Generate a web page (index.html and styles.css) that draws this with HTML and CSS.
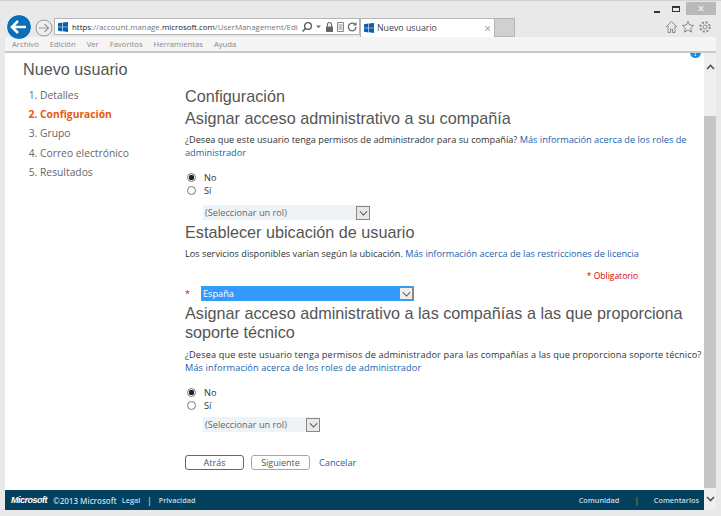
FILE: index.html
```html
<!DOCTYPE html>
<html lang="es">
  <head>
    <meta charset="UTF-8" />
    <title>Nuevo usuario</title>
    <link rel="stylesheet" href="styles.css">
  </head>
  <body>
    <div class="window">
      <div class="toolbar">
        <div class="back">
          <svg width="26" height="26" viewBox="0 0 26 26"><circle cx="13" cy="13" r="12.500" fill="#0a6fb7" stroke="#fff"/><path d="M6 13h14M12 7l-6 6 6 6" fill="none" stroke="#fff" stroke-width="2.600"/></svg>
        </div>
        <div class="forward">
          <svg width="18" height="18" viewBox="0 0 18 18"><circle cx="9" cy="9" r="8" fill="#eee" stroke="#999"/><path d="M4 9h9M9.500 5l4 4-4 4" fill="none" stroke="#999" stroke-width="1.200"/></svg>
        </div>
        <div class="address">
          <svg class="winlogo" width="10" height="10" viewBox="0 0 10 10"><path d="M0 1.200l4.400-.7v4.200H0zM5 .4L10 0v4.700H5zM0 5.300h4.400v4.200L0 8.800zM5 5.300h5V10l-5-.7z" fill="#0a5fb0"/></svg>
          <span class="url"><b>https</b>://account.manage.<b>microsoft.com</b>/UserManagement/Edit</span>
          <svg class="addr-icons" width="58" height="12" viewBox="0 0 58 12">
            <circle cx="7" cy="5" r="3.400" fill="none" stroke="#555" stroke-width="1.300"/><path d="M4.500 7.500L1.500 10.500" stroke="#555" stroke-width="1.500"/>
            <path d="M15 4.500h5l-2.500 2.700z" fill="#777"/>
            <path d="M25 5.500h7v5.500h-7z" fill="#666"/><path d="M26.500 5.500V3.500a2 2 0 0 1 4 0v2" fill="none" stroke="#666" stroke-width="1.200"/>
            <path d="M36.500 1.500h6v9h-6zM37.500 4h4M37.500 6h4M37.500 8h4" fill="none" stroke="#888"/>
            <path d="M55 6a3.800 3.800 0 1 1-1.200-2.800" fill="none" stroke="#666" stroke-width="1.300"/><path d="M55.500 1v3.500H52z" fill="#666"/>
          </svg>
        </div>
        <div class="tab">
          <svg width="10" height="10" viewBox="0 0 10 10"><path d="M0 1.200l4.400-.7v4.200H0zM5 .4L10 0v4.700H5zM0 5.300h4.400v4.200L0 8.800zM5 5.300h5V10l-5-.7z" fill="#0a5fb0"/></svg>
          <span class="tab-title">Nuevo usuario</span>
          <span class="tab-close">×</span>
        </div>
        <div class="newtab"></div>
        <div class="tools">
          <svg width="46" height="14" viewBox="0 0 46 14" fill="none" stroke="#8a8a8a">
            <path d="M1 7l5.500-5.500L12 7M3 6v6.500h2.500V9h2v3.500H10V6"/>
            <path d="M23 1.200l1.700 3.800 4 .4-3 2.700.9 4-3.600-2.100-3.600 2.100.9-4-3-2.700 4-.4z"/>
            <circle cx="40" cy="7" r="2"/><circle cx="40" cy="7" r="4.700" stroke-width="2" stroke-dasharray="2 1.700"/>
          </svg>
        </div>
        <div class="winbtns">
          <span class="minbtn"></span>
          <span class="maxbtn"></span>
          <span class="closebtn">×</span>
        </div>
      </div>
      <div class="menubar">
        <span>Archivo</span><span>Edición</span><span>Ver</span><span>Favoritos</span><span>Herramientas</span><span>Ayuda</span>
      </div>

      <div class="viewport">
        <div class="page">
          <div class="columns">
            <aside class="sidebar">
              <h1>Nuevo usuario</h1>
              <ol class="steps">
                <li>Detalles</li>
                <li class="active">Configuración</li>
                <li>Grupo</li>
                <li>Correo electrónico</li>
                <li>Resultados</li>
              </ol>
            </aside>
            <main class="content">
              <span class="help">?</span>
              <h2>Configuración</h2>
              <h2>Asignar acceso administrativo a su compañía</h2>
              <p>¿Desea que este usuario tenga permisos de administrador para su compañía? <a href="#">Más información acerca de los roles de administrador</a></p>
              <div class="radios">
                <label><span class="radio on"></span>No</label>
                <label><span class="radio"></span>Sí</label>
              </div>
              <div class="select role"><span>(Seleccionar un rol)</span><i class="arrow"></i></div>

              <h2 class="location">Establecer ubicación de usuario</h2>
              <p>Los servicios disponibles varían según la ubicación. <a href="#">Más información acerca de las restricciones de licencia</a></p>
              <div class="required">* Obligatorio</div>
              <div class="country-row">
                <span class="star">*</span>
                <div class="select country"><span>España</span><i class="arrow"></i></div>
              </div>

              <h2 class="long">Asignar acceso administrativo a las compañías a las que proporciona soporte técnico</h2>
              <p class="wide">¿Desea que este usuario tenga permisos de administrador para las compañías a las que proporciona soporte técnico?<br><a href="#">Más información acerca de los roles de administrador</a></p>
              <div class="radios">
                <label><span class="radio on"></span>No</label>
                <label><span class="radio"></span>Sí</label>
              </div>
              <div class="select role short"><span>(Seleccionar un rol)</span><i class="arrow"></i></div>

              <div class="buttons">
                <button>Atrás</button>
                <button class="primary">Siguiente</button>
                <a href="#">Cancelar</a>
              </div>
            </main>
          </div>
          <footer class="footer">
            <span class="mslogo">Microsoft</span>
            <span>©2013 Microsoft</span>
            <span class="small">Legal</span>
            <span class="bar">|</span>
            <span class="small">Privacidad</span>
            <span class="spacer"></span>
            <span class="small">Comunidad</span>
            <span class="sep">|</span>
            <span class="small">Comentarios</span>
          </footer>
        </div>
        <div class="scrollbar">
          <div class="sb-arrow up"><svg width="9" height="6" viewBox="0 0 9 6"><path d="M1 5l3.500-3.500L8 5" fill="none" stroke="#555" stroke-width="1.600"/></svg></div>
          <div class="sb-thumb"></div>
          <div class="sb-arrow"><svg width="9" height="6" viewBox="0 0 9 6"><path d="M1 1l3.500 3.500L8 1" fill="none" stroke="#555" stroke-width="1.600"/></svg></div>
        </div>
      </div>
    </div>
  </body>
</html>
```

FILE: styles.css
```css
* {
  box-sizing: border-box;
}

body {
  margin: 0;
  font-family: "Open Sans", sans-serif;
  font-size: 9.200px;
  color: #333;
  background: #e9e9e9;
}

.window {
  width: 721px;
  height: 516px;
  display: flex;
  flex-direction: column;
  border-top: 1px solid #d0d0d0;
  overflow: hidden;
}

.toolbar {
  height: 36px;
  flex-shrink: 0;
  display: flex;
  align-items: flex-end;
  padding-left: 6px;
  position: relative;
}

.back {
  height: 26px;
  margin-bottom: -3px;
  position: relative;
  z-index: 1;
}

.forward {
  height: 18px;
  margin: 0 1px 0 3px;
}

.address {
  width: 306px;
  height: 17px;
  margin-bottom: 2px;
  border: 1px solid #b5b5b5;
  background: #fff;
  display: flex;
  align-items: center;
  padding-left: 2px;
}

.winlogo {
  margin: 0 4px 0 1px;
  flex-shrink: 0;
}

.url {
  width: 226px;
  overflow: hidden;
  white-space: nowrap;
  color: #777;
  font-size: 7.900px;
}

.url b {
  color: #222;
  font-weight: 400;
}

.addr-icons {
  flex-shrink: 0;
  margin-left: 3px;
}

.tab {
  width: 135px;
  height: 19px;
  background: #fff;
  border: 1px solid #b5b5b5;
  border-bottom: none;
  display: flex;
  align-items: center;
  padding-left: 3px;
  gap: 3px;
}

.tab-title {
  flex: 1;
  color: #444;
  font-size: 8.800px;
}

.tab-close {
  color: #999;
  font-size: 12px;
  margin-right: 3px;
}

.newtab {
  width: 20px;
  height: 19px;
  background: #d0d0d0;
  border: 1px solid #b5b5b5;
  border-left: none;
}

.tools {
  position: absolute;
  right: 10px;
  top: 19px;
}

.winbtns {
  position: absolute;
  top: 1px;
  right: 5px;
  display: flex;
  height: 13px;
  align-items: center;
}

.minbtn {
  width: 6px;
  height: 2px;
  background: #333;
  margin: 7px 12px 0 0;
}

.maxbtn {
  width: 8px;
  height: 6px;
  border: 1px solid #333;
  border-top-width: 2px;
  margin-right: 6px;
}

.closebtn {
  width: 30px;
  height: 13px;
  background: #b9b9b9;
  color: #fff;
  font-size: 12px;
  line-height: 13px;
  text-align: center;
}

.menubar {
  margin: 0 5px;
  height: 16px;
  flex-shrink: 0;
  background: #f5f5f5;
  border-bottom: 2px solid #c8c8c8;
  display: flex;
  gap: 11px;
  align-items: center;
  padding-left: 7px;
  font-size: 7.700px;
  color: #888;
}

.viewport {
  flex: 1;
  display: flex;
  margin: 0 5px 6px 5px;
  min-height: 0;
}

.page {
  flex: 1;
  background: #fff;
  display: flex;
  flex-direction: column;
  min-width: 0;
}

.columns {
  flex: 1;
  display: flex;
  min-height: 0;
  overflow: hidden;
}

.sidebar {
  width: 180px;
  padding-left: 18px;
}

.sidebar h1 {
  margin: 6px 0 7px;
  font-family: "Liberation Sans", sans-serif;
  font-weight: 400;
  font-size: 16.200px;
  line-height: 20px;
  color: #555;
}

.steps {
  margin: 0;
  padding: 0 0 0 17px;
  font-size: 10.300px;
  line-height: 19.200px;
  color: #666;
}

.steps .active {
  color: #e8590c;
  font-weight: 700;
}

.content {
  flex: 1;
  position: relative;
  padding: 32px 0 0 0;
  min-width: 0;
}

.help {
  position: absolute;
  right: 3px;
  top: -6px;
  width: 11px;
  height: 11px;
  border-radius: 50%;
  background: #1a8fd8;
  color: #fff;
  font-size: 8px;
  font-weight: 700;
  line-height: 11px;
  text-align: center;
}

h2 {
  margin: 0;
  font-family: "Liberation Sans", sans-serif;
  font-weight: 400;
  font-size: 16.200px;
  line-height: 22px;
  color: #555;
}

h2.location {
  margin-top: 1px;
}

h2.long {
  margin-top: 3px;
  line-height: 19px;
}

p {
  margin: 4px 0 0;
  line-height: 13px;
  color: #333;
}

p.wide {
  margin-top: 6px;
  letter-spacing: 0.120px;
}

p a,
.buttons a {
  color: #1a62ae;
  text-decoration: none;
}

.radios {
  margin: 12px 0 0 2px;
  display: flex;
  flex-direction: column;
}

.radios label {
  height: 13px;
  display: flex;
  align-items: center;
  gap: 8px;
}

.radio {
  width: 9px;
  height: 9px;
  border: 1px solid #777;
  border-radius: 50%;
  background: #fff;
}

.radio.on {
  background: radial-gradient(circle, #222 0 2.500px, #fff 3px);
}

.select {
  display: flex;
  align-items: center;
  justify-content: space-between;
}

.role {
  width: 167px;
  height: 15px;
  margin: 8px 0 0 18px;
  background: #eef3f8;
  color: #666;
  padding-left: 2px;
}

.role.short {
  width: 117px;
  margin-top: 5px;
}

.arrow {
  width: 14px;
  height: 14px;
  border: 1px solid #888;
  background: #e8e8e8;
  position: relative;
  flex-shrink: 0;
}

.arrow::after {
  content: "";
  position: absolute;
  left: 3px;
  top: 1px;
  width: 6px;
  height: 6px;
  border-right: 1.500px solid #333;
  border-bottom: 1.500px solid #333;
  transform: rotate(45deg) scale(0.8);
}

.required {
  margin-top: 9px;
  text-align: right;
  padding-right: 66px;
  color: #d00;
  line-height: 14px;
  font-size: 8.500px;
}

.country-row {
  display: flex;
  align-items: center;
  margin-top: 3px;
  height: 15px;
}

.star {
  color: #d00;
  width: 16px;
}

.country {
  width: 213px;
  height: 15px;
  border: 1px solid #33a0f0;
  background: #3399ff;
  color: #fff;
  padding-left: 1px;
}

.country .arrow {
  height: 13px;
  background: #eee;
}

.buttons {
  margin-top: 23px;
  display: flex;
  align-items: center;
  gap: 7px;
}

.buttons button {
  width: 59px;
  height: 15px;
  padding: 0;
  border: 1px solid #666;
  border-radius: 3px;
  background: #fff;
  color: #555;
  font-family: inherit;
  font-size: 9px;
}

.buttons .primary {
  border-color: #5cc0ee;
}

.buttons a {
  margin-left: 2px;
}

.footer {
  height: 20px;
  background: #03405e;
  color: #c4dde8;
  display: flex;
  align-items: center;
  padding: 0 5px 0 6px;
  gap: 5px;
  font-size: 8px;
  font-weight: 600;
  flex-shrink: 0;
}

.mslogo {
  font-family: "Liberation Sans", sans-serif;
  font-style: italic;
  font-weight: 700;
  font-size: 9px;
  letter-spacing: -0.500px;
  color: #fff;
  margin-right: 1px;
}

.spacer {
  flex: 1;
}

.small {
  font-size: 7.300px;
}

.bar {
  margin: 0 2px;
}

.sep {
  color: #c77a2a;
  margin: 0 10px;
}

.scrollbar {
  width: 12px;
  background: #efefef;
  display: flex;
  flex-direction: column;
}

.sb-arrow {
  height: 22px;
  display: flex;
  align-items: center;
  justify-content: center;
}

.sb-arrow.up {
  height: 28px;
}

.sb-thumb {
  flex: 1;
  background: #c6c6c6;
  margin-top: 35px;
}
```
